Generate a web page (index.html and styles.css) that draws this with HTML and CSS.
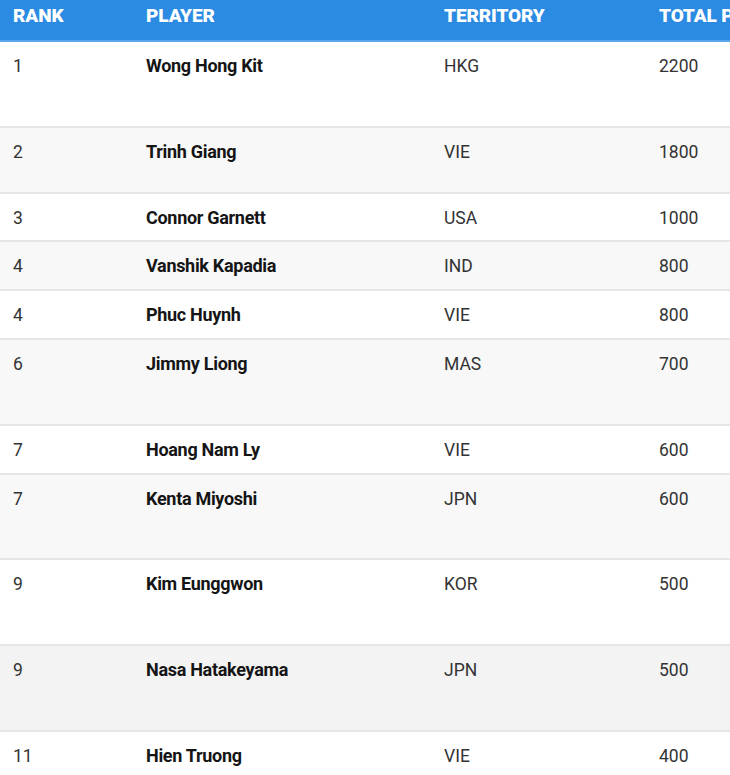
FILE: index.html
```html
<!DOCTYPE html>
<html>
<head>
<meta charset="utf-8">
<link rel="stylesheet" href="styles.css">
</head>
<body>
<table class="ranking">
  <colgroup>
    <col class="c-rank"><col class="c-player"><col class="c-terr"><col class="c-total">
  </colgroup>
  <thead>
    <tr><th>RANK</th><th>PLAYER</th><th>TERRITORY</th><th>TOTAL POINTS</th></tr>
  </thead>
  <tbody>
    <tr class="odd tall3"><td>1</td><td class="name">Wong Hong Kit</td><td>HKG</td><td>2200</td></tr>
    <tr class="even tall2"><td>2</td><td class="name">Trinh Giang</td><td>VIE</td><td>1800</td></tr>
    <tr class="odd"><td>3</td><td class="name">Connor Garnett</td><td>USA</td><td>1000</td></tr>
    <tr class="even"><td>4</td><td class="name">Vanshik Kapadia</td><td>IND</td><td>800</td></tr>
    <tr class="odd"><td>4</td><td class="name">Phuc Huynh</td><td>VIE</td><td>800</td></tr>
    <tr class="even tall3"><td>6</td><td class="name">Jimmy Liong</td><td>MAS</td><td>700</td></tr>
    <tr class="odd"><td>7</td><td class="name">Hoang Nam Ly</td><td>VIE</td><td>600</td></tr>
    <tr class="even tall3"><td>7</td><td class="name">Kenta Miyoshi</td><td>JPN</td><td>600</td></tr>
    <tr class="odd tall3"><td>9</td><td class="name">Kim Eunggwon</td><td>KOR</td><td>500</td></tr>
    <tr class="even dark tall3"><td>9</td><td class="name">Nasa Hatakeyama</td><td>JPN</td><td>500</td></tr>
    <tr class="odd"><td>11</td><td class="name">Hien Truong</td><td>VIE</td><td>400</td></tr>
  </tbody>
</table>
</body>
</html>
```
FILE: styles.css
```css
html, body {
  margin: 0;
  padding: 0;
  background: #ffffff;
  overflow: hidden;
}
body {
  font-family: Roboto, "Liberation Sans", sans-serif;
  color: #333333;
}
.ranking {
  border-collapse: separate;
  border-spacing: 0;
  table-layout: fixed;
  width: 900px;
}
.c-rank { width: 133px; }
.c-player { width: 298px; }
.c-terr { width: 215px; }
.c-total { width: 254px; }
.ranking th {
  text-align: left;
  color: #ffffff;
  background: #2b8ae2;
  border-bottom: 2px solid #5ba7ee;
  font-weight: 900;
  font-size: 19px;
  letter-spacing: -0.1px;
  height: 42px;
  padding: 0 0 9px 13px;
  box-sizing: border-box;
  white-space: nowrap;
  vertical-align: middle;
}
.ranking td {
  vertical-align: top;
  padding: 14px 0 0 13px;
  height: 48.9px;
  box-sizing: border-box;
  border-bottom: 2px solid #e6e6e6;
  font-size: 17.5px;
  line-height: 20px;
}
.ranking tr.odd td { background: #ffffff; }
.ranking tr.even td { background: #f8f8f8; }
.ranking tr.dark td { background: #f3f3f3; }
.ranking tr.tall2 td { height: 66px; }
.ranking tr.tall3 td { height: 85.6px; }
.ranking td.name {
  font-weight: 700;
  font-size: 18px;
  color: #151515;
  letter-spacing: -0.3px;
}
```
